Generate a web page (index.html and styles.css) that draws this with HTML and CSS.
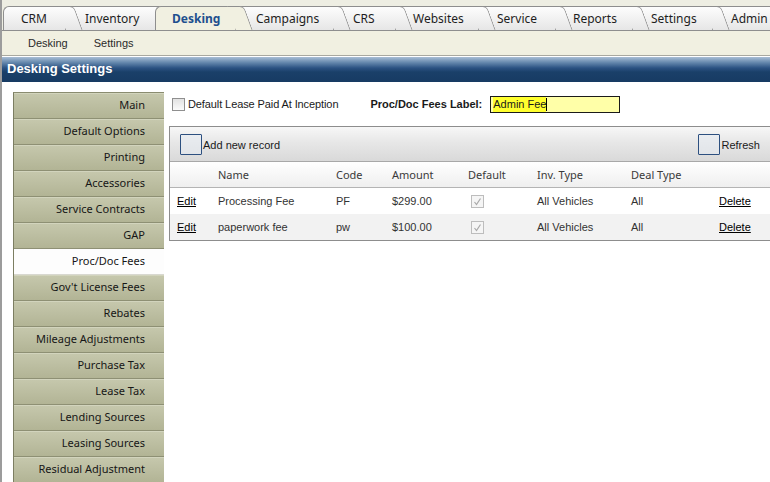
FILE: index.html
```html
<!DOCTYPE html>
<html>
<head>
<meta charset="utf-8">
<link rel="stylesheet" href="styles.css">
</head>
<body>
<div class="page">
  <div class="tabs">
    <div class="tab">CRM</div>
    <div class="tab">Inventory</div>
    <div class="tab active">Desking</div>
    <div class="tab">Campaigns</div>
    <div class="tab">CRS</div>
    <div class="tab">Websites</div>
    <div class="tab">Service</div>
    <div class="tab">Reports</div>
    <div class="tab">Settings</div>
    <div class="tab">Admin</div>
  </div>
  <div class="subnav">
    <span class="sublink">Desking</span>
    <span class="sublink">Settings</span>
  </div>
  <div class="titlebar">Desking Settings</div>
  <div class="main">
    <ul class="menu">
      <li>Main</li>
      <li>Default Options</li>
      <li>Printing</li>
      <li>Accessories</li>
      <li>Service Contracts</li>
      <li>GAP</li>
      <li class="selected">Proc/Doc Fees</li>
      <li>Gov't License Fees</li>
      <li>Rebates</li>
      <li>Mileage Adjustments</li>
      <li>Purchase Tax</li>
      <li>Lease Tax</li>
      <li>Lending Sources</li>
      <li>Leasing Sources</li>
      <li>Residual Adjustment</li>
    </ul>
    <div class="content">
      <div class="opts">
        <span class="cbox"></span>
        <span class="optlabel">Default Lease Paid At Inception</span>
        <span class="feelabel">Proc/Doc Fees Label:</span>
        <span class="field"><span class="sel">Admin Fee</span><span class="caret"></span></span>
      </div>
      <div class="grid">
        <div class="toolbar">
          <span class="tbtn"></span><span class="tbtext">Add new record</span>
          <span class="spacer"></span>
          <span class="tbtn"></span><span class="tbtext">Refresh</span>
        </div>
        <table class="tbl">
          <thead>
            <tr>
              <th class="c-edit"></th>
              <th class="c-name">Name</th>
              <th class="c-code">Code</th>
              <th class="c-amt">Amount</th>
              <th class="c-def">Default</th>
              <th class="c-inv">Inv. Type</th>
              <th class="c-deal">Deal Type</th>
              <th class="c-del"></th>
            </tr>
          </thead>
          <tbody>
            <tr>
              <td><a class="lnk">Edit</a></td>
              <td>Processing Fee</td>
              <td>PF</td>
              <td>$299.00</td>
              <td><span class="dchk"><svg width="11" height="11" viewBox="0 0 11 11"><path d="M2.5 6 L4.5 8.5 L8.5 2.5" fill="none" stroke="#a8a8a8" stroke-width="1.2"/></svg></span></td>
              <td>All Vehicles</td>
              <td>All</td>
              <td><a class="lnk">Delete</a></td>
            </tr>
            <tr class="alt">
              <td><a class="lnk">Edit</a></td>
              <td>paperwork fee</td>
              <td>pw</td>
              <td>$100.00</td>
              <td><span class="dchk"><svg width="11" height="11" viewBox="0 0 11 11"><path d="M2.5 6 L4.5 8.5 L8.5 2.5" fill="none" stroke="#a8a8a8" stroke-width="1.2"/></svg></span></td>
              <td>All Vehicles</td>
              <td>All</td>
              <td><a class="lnk">Delete</a></td>
            </tr>
          </tbody>
        </table>
      </div>
    </div>
  </div>
</div>
</body>
</html>
```
FILE: styles.css
```css
html, body {
  margin: 0;
  padding: 0;
  background: #ffffff;
}
body {
  width: 770px;
  height: 482px;
  overflow: hidden;
  font-family: "Liberation Sans", Arial, sans-serif;
}
.page {
  border-left: 2px solid #9c9c9c;
  height: 482px;
  box-sizing: border-box;
  background: #fff;
}

/* Tabs */
.tabs {
  display: flex;
  align-items: flex-end;
  height: 25px;
  padding: 5px 0 0 1px;
  background: #eeeee3;
  border-bottom: 1px solid #8e8e8e;
  overflow: hidden;
}
.tab {
  position: relative;
  flex: none;
  box-sizing: border-box;
  height: 24px;
  line-height: 23px;
  padding-left: 18px;
  text-align: left;
  font-family: "Noto Sans", "Open Sans", sans-serif;
  font-size: 12px;
  color: #1e1e1e;
  background: linear-gradient(#fdfdfd, #e6e6e6);
  border-top: 1px solid #8e8e8e;
  border-left: 1px solid #8e8e8e;
  border-top-left-radius: 6px;
  white-space: nowrap;
}
.tab::after {
  content: "";
  position: absolute;
  top: -1px;
  bottom: 0;
  right: -9px;
  width: 16px;
  background: linear-gradient(#fdfdfd, #e6e6e6);
  border-top: 1px solid #8e8e8e;
  border-right: 1px solid #8e8e8e;
  border-top-right-radius: 5px;
  transform: skewX(20deg);
  transform-origin: top left;
  z-index: -1;
}
.tab:nth-child(1) { z-index: 10; width: 62px; padding-left: 17px; }
.tab:nth-child(2) { z-index: 9; width: 90px; padding-left: 19px; }
.tab:nth-child(3) { z-index: 8; width: 80px; padding-left: 16px; }
.tab:nth-child(4) { z-index: 7; width: 98px; padding-left: 20px; }
.tab:nth-child(5) { z-index: 6; width: 62px; padding-left: 19px; }
.tab:nth-child(6) { z-index: 5; width: 83px; padding-left: 17px; }
.tab:nth-child(7) { z-index: 4; width: 77px; }
.tab:nth-child(8) { z-index: 3; width: 77px; padding-left: 17px; }
.tab:nth-child(9) { z-index: 2; width: 80px; }
.tab:nth-child(10) { z-index: 1; width: 70px; }
.tab.active {
  z-index: 20;
  height: 25px;
  margin-bottom: -1px;
  background: #f1f0e1;
  color: #1f4f8e;
  font-weight: bold;
}
.tab.active::after {
  background: #f1f0e1;
  bottom: 0;
}

/* Sub navigation */
.subnav {
  height: 24px;
  display: flex;
  align-items: center;
  gap: 26px;
  padding-left: 26px;
  background: #f1f0e1;
  border-bottom: 1px solid #a9a9a0;
  margin-bottom: 1px;
  font-size: 11px;
  color: #2a2a2a;
}

/* Title bar */
.titlebar {
  height: 25px;
  line-height: 24px;
  padding-left: 5px;
  color: #ffffff;
  font-weight: bold;
  font-size: 13px;
  background: linear-gradient(#a9bed5 0%, #6588ad 22%, #2b5282 44%, #1a4069 60%, #173b63 100%);
}

/* Main area */
.main {
  display: flex;
  align-items: flex-start;
}
.menu {
  list-style: none;
  margin: 10px 0 0 11px;
  padding: 0;
  width: 150px;
  flex: none;
  border-left: 1px solid #7c7e62;
  border-top: 1px solid #8a8c70;
  font-family: "Noto Sans", "Open Sans", sans-serif;
  font-size: 11px;
  color: #161616;
}
.menu li {
  height: 25px;
  line-height: 23px;
  text-align: right;
  padding-right: 19px;
  background: linear-gradient(#c6c8ad, #b2b495);
  border-bottom: 1px solid #8e9074;
  box-shadow: inset 0 1px 0 #d2d4bd;
}
.menu li.selected {
  background: #fdfdfd;
  box-shadow: none;
  border-bottom: 1px solid #d8d8d0;
}

.content {
  flex: 1;
  margin-left: 5px;
  margin-right: -2px;
  padding-top: 13px;
}
.opts {
  display: flex;
  align-items: center;
  height: 18px;
  padding-left: 3px;
  font-size: 11px;
  color: #1a1a1a;
}
.cbox {
  width: 11px;
  height: 11px;
  border: 1px solid #8f8f8f;
  background: linear-gradient(#e2e2e2, #fbfbfb);
  margin-right: 3px;
}
.optlabel {
  margin-right: 32px;
  letter-spacing: -0.1px;
}
.feelabel {
  font-weight: bold;
  margin-right: 8px;
}
.field {
  display: flex;
  align-items: center;
  width: 126px;
  height: 15px;
  border: 1px solid #1a1a1a;
  background: #ffffa8;
  padding-left: 2px;
}
.sel {
  background: #ffff2e;
  height: 15px;
  line-height: 15px;
  color: #1a1a1a;
}
.caret {
  width: 1px;
  height: 13px;
  background: #000;
}

/* Grid */
.grid {
  margin-top: 13px;
  border: 1px solid #8d8d8d;
  background: #fff;
}
.toolbar {
  height: 34px;
  display: flex;
  align-items: center;
  padding: 0 11px 0 10px;
  background: linear-gradient(#f7f7f7, #e7e7e7 45%, #d9d9d9);
  border-bottom: 1px solid #a8a8a8;
  font-size: 11px;
  color: #1a1a1a;
}
.tbtn {
  width: 20px;
  height: 19px;
  border: 1px solid #2d5080;
  background: rgba(230, 236, 244, 0.5);
  border-radius: 1px;
}
.tbtext {
  margin-left: 1px;
  padding-top: 2px;
}
.spacer {
  flex: 1;
}
.tbl {
  width: 100%;
  border-collapse: collapse;
  font-size: 11px;
  color: #333;
}
.tbl th {
  height: 25px;
  text-align: left;
  font-family: "Noto Sans", "Open Sans", sans-serif;
  font-weight: normal;
  font-size: 11px;
  color: #3a3a3a;
  padding: 0 0 0 7px;
  background: linear-gradient(#ffffff, #efefef);
  border-bottom: 1px solid #b4b4b4;
}
.tbl td {
  height: 26px;
  padding: 0 0 0 7px;
}
.tbl tr.alt td {
  background: #f2f2f2;
}
.c-edit { width: 34px; }
.c-name { width: 111px; }
.c-code { width: 49px; }
.c-amt { width: 69px; }
.c-def { width: 62px; }
.c-inv { width: 87px; }
.c-deal { width: 81px; }
.lnk {
  color: #000;
  text-decoration: underline;
}
.dchk {
  display: inline-flex;
  align-items: center;
  justify-content: center;
  width: 11px;
  height: 11px;
  margin-left: 3px;
  border: 1px solid #bdbdbd;
  background: #f5f5f5;
  vertical-align: middle;
}
```
